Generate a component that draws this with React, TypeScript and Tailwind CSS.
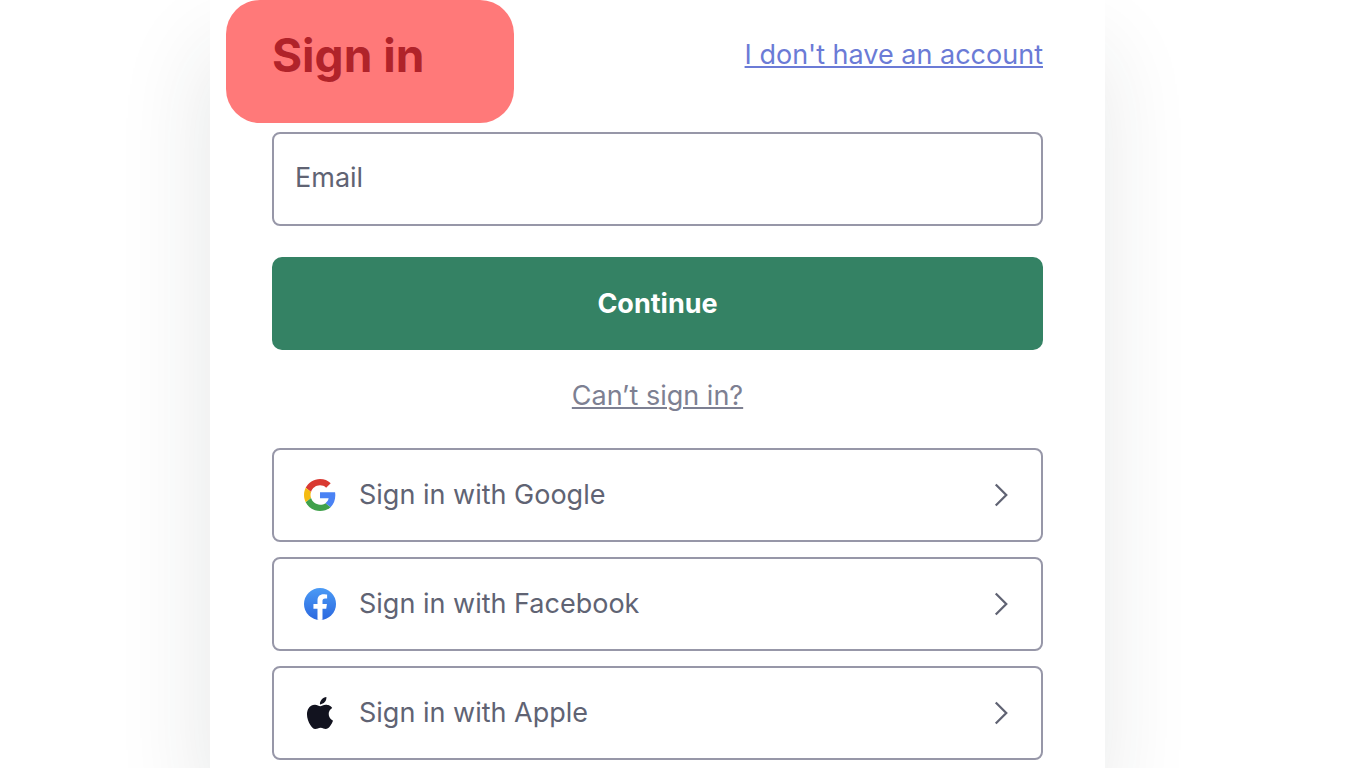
import React from 'react';
import { ChevronRight } from 'lucide-react';

const GoogleIcon = () => (
  <svg viewBox="0 0 48 48" className="w-8 h-8" aria-hidden="true">
    <path fill="#d93a32" d="M24 9.5c3.54 0 6.71 1.22 9.21 3.6l6.85-6.85C35.9 2.38 30.47 0 24 0 14.62 0 6.51 5.38 2.56 13.22l7.98 6.19C12.43 13.72 17.74 9.5 24 9.5z" />
    <path fill="#4a82f4" d="M46.98 24.55c0-1.57-.15-3.09-.38-4.55H24v9.02h12.94c-.58 2.96-2.26 5.48-4.78 7.18l7.73 6c4.51-4.18 7.09-10.36 7.09-17.65z" />
    <path fill="#f5bb12" d="M10.53 28.59c-.48-1.45-.76-2.99-.76-4.59s.27-3.14.76-4.59l-7.98-6.19C.92 16.46 0 20.12 0 24c0 3.88.92 7.54 2.56 10.78l7.97-6.19z" />
    <path fill="#40a14b" d="M24 48c6.48 0 11.93-2.13 15.89-5.81l-7.73-6c-2.15 1.45-4.92 2.3-8.16 2.3-6.26 0-11.57-4.22-13.47-9.91l-7.98 6.19C6.51 42.62 14.62 48 24 48z" />
  </svg>
);

const FacebookIcon = () => (
  <svg viewBox="0 0 24 24" className="w-8 h-8" aria-hidden="true">
    <defs>
      <linearGradient id="fb-blue" x1="0" y1="0" x2="0" y2="1">
        <stop offset="0" stopColor="#4a9af5" />
        <stop offset="1" stopColor="#2b68df" />
      </linearGradient>
    </defs>
    <circle cx="12" cy="12" r="12" fill="url(#fb-blue)" />
    <path fill="#fff" d="M16.67 15.47l.53-3.47h-3.33V9.75c0-.95.47-1.87 1.96-1.87h1.51V4.93s-1.37-.24-2.69-.24c-2.74 0-4.53 1.66-4.53 4.67V12H7.08v3.47h3.04v8.39a12.1 12.1 0 0 0 3.75 0v-8.39h2.8z" />
  </svg>
);

const AppleIcon = () => (
  <svg viewBox="0 0 24 24" className="w-8 h-8" fill="#12131f" aria-hidden="true">
    <path d="M12.152 6.896c-.948 0-2.415-1.078-3.96-1.04-2.04.027-3.91 1.183-4.961 3.014-2.117 3.675-.546 9.103 1.519 12.09 1.013 1.454 2.208 3.09 3.792 3.039 1.52-.065 2.09-.987 3.935-.987 1.831 0 2.35.987 3.96.948 1.637-.026 2.676-1.48 3.676-2.948 1.156-1.688 1.636-3.325 1.662-3.415-.039-.013-3.182-1.221-3.22-4.857-.026-3.04 2.48-4.494 2.597-4.559-1.429-2.09-3.623-2.324-4.39-2.376-2-.156-3.675 1.09-4.61 1.09zM15.53 3.83c.843-1.012 1.4-2.427 1.245-3.83-1.207.052-2.662.805-3.532 1.818-.78.896-1.454 2.338-1.273 3.714 1.338.104 2.715-.688 3.559-1.701" />
  </svg>
);

const PROVIDERS = [
  { name: 'Google', Icon: GoogleIcon },
  { name: 'Facebook', Icon: FacebookIcon },
  { name: 'Apple', Icon: AppleIcon },
];

const App: React.FC = () => {
  return (
    <div className="h-screen overflow-hidden bg-white pl-[210px] pr-[252px] font-['Inter',sans-serif] text-[27px] leading-8 text-[#606373]">
      <main className="min-h-full bg-white px-[62px] pb-2 shadow-[-4px_50px_86px_rgba(35,45,50,0.11)]">
        <header className="flex items-start justify-between -ml-[46px]">
          <h1 className="w-72 rounded-[34px] bg-[#ff7979] pl-[46px] pt-[31px] pb-[44px] text-[46px] leading-[48px] font-bold text-[#b0232a]">
            Sign in
          </h1>
          <a href="#signup" className="mt-[39px] text-[#6b7bd6] underline decoration-2 underline-offset-2">
            I don't have an account
          </a>
        </header>

        <form className="mt-[9px]" onSubmit={(e) => e.preventDefault()}>
          <input
            type="email"
            aria-label="Email"
            placeholder="Email"
            className="block w-full h-[94px] rounded-lg border-2 border-[#9797a8] px-[21px] pb-1 placeholder:text-[#606373]"
          />
          <button type="submit" className="mt-[31px] w-full h-[93px] rounded-[10px] bg-[#348264] font-bold text-white">
            Continue
          </button>
        </form>

        <div className="mt-[30px] text-center">
          <a href="#help" className="text-[#7d8092] underline decoration-2 underline-offset-2">
            Can’t sign in?
          </a>
        </div>

        {/* Social sign in */}
        <div className="mt-9 flex flex-col gap-[15px]">
          {PROVIDERS.map(({ name, Icon }) => (
            <button
              key={name}
              type="button"
              className="flex w-full h-[94px] items-center rounded-lg border-2 border-[#9797a8] pl-[30px] pr-[19px] text-left"
            >
              <Icon />
              <span className="ml-[23px] flex-1">Sign in with {name}</span>
              <ChevronRight size={42} strokeWidth={1.3} strokeLinecap="butt" strokeLinejoin="miter" />
            </button>
          ))}
        </div>
      </main>
    </div>
  );
};

export default App;
